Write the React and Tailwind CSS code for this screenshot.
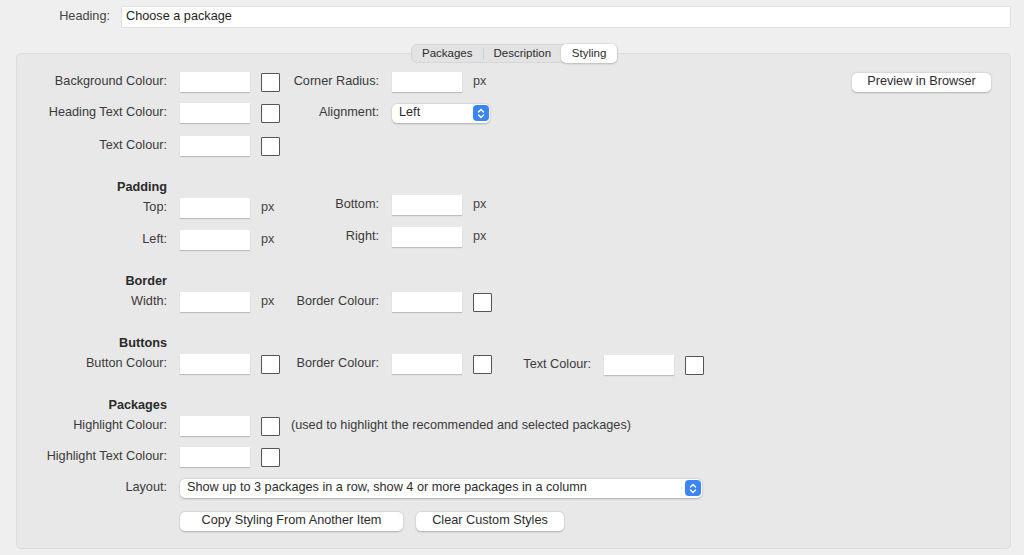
import React from "react";

const FONT = { fontFamily: '"Liberation Sans", Arial, sans-serif' };

function Field({ w = "w-[70px]" }) {
  return (
    <div
      className={`${w} h-[20px] bg-white shadow-[0_1px_1px_rgba(0,0,0,0.18)]`}
    />
  );
}

function Swatch() {
  return (
    <div className="w-[19px] h-[19px] bg-white border-[1.5px] border-[#555] rounded-[1px]" />
  );
}

function Chevrons() {
  return (
    <div className="w-[16px] h-[16px] rounded-[4px] bg-[#3c84f7] flex items-center justify-center">
      <svg width="8" height="11" viewBox="0 0 8 11" fill="none">
        <path
          d="M1.5 4 L4 1.5 L6.5 4 M1.5 7 L4 9.5 L6.5 7"
          stroke="white"
          strokeWidth="1.4"
          strokeLinecap="round"
          strokeLinejoin="round"
        />
      </svg>
    </div>
  );
}

function Select({ w, children }) {
  return (
    <div
      className={`${w} h-[19px] bg-white rounded-[5px] shadow-[0_0.5px_2px_rgba(0,0,0,0.25)] flex items-center justify-between pl-[7px] pr-[1px]`}
    >
      <span className="text-[#2c2c2c]">{children}</span>
      <Chevrons />
    </div>
  );
}

function Button({ w, children }) {
  return (
    <div
      className={`${w} h-[19px] bg-white rounded-[5px] shadow-[0_0.5px_2px_rgba(0,0,0,0.25)] flex items-center justify-center text-[#2c2c2c]`}
    >
      {children}
    </div>
  );
}

// label column ends at x=167, field starts at x=180 (panel content starts at x=17)
function Label({ w = "w-[163px]", children }) {
  return <div className={`${w} shrink-0 text-right pr-[13px] text-[#3a3a3a]`}>{children}</div>;
}

function Px() {
  return <div className="w-[30px] shrink-0 pl-[11px] text-[#444]">px</div>;
}

function SwatchCell() {
  return (
    <div className="w-[30px] shrink-0 pl-[11px] flex items-center">
      <Swatch />
    </div>
  );
}

function Row({ className = "", children }) {
  return <div className={`flex items-center h-[20px] ${className}`}>{children}</div>;
}

function Section({ className = "", children }) {
  return (
    <div className={`w-[163px] pr-[13px] text-right font-bold text-[#2a2a2a] h-[16px] leading-[16px] ${className}`}>
      {children}
    </div>
  );
}

export default function App() {
  return (
    <div
      className="w-[1024px] h-[555px] bg-[#efefef] overflow-hidden text-[12.7px]"
      style={FONT}
    >
      {/* Heading */}
      <div className="flex items-center pt-[7px]">
        <div className="w-[110px] text-right text-[#444]">Heading:</div>
        <div className="ml-[12px] w-[888px] h-[20px] bg-white shadow-[0_0_0_0.5px_rgba(0,0,0,0.12)] flex items-center pl-[4px] text-[#1e1e1e]">
          Choose a package
        </div>
      </div>

      {/* Tabs */}
      <div className="relative z-10 flex mt-[17px] -mb-[10px] pl-[411px]">
        <div className="flex items-center h-[19px] bg-[#e3e3e3] border border-[#d6d6d6] rounded-[6px] text-[11.5px] text-[#2c2c2c]">
          <div className="px-[10px]">Packages</div>
          <div className="w-px h-[11px] bg-[#cfcfcf]" />
          <div className="pl-[10px] pr-[10px]">Description</div>
          <div className="h-[19px] w-[56px] -my-px bg-white rounded-[5px] shadow-[0_0.5px_2px_rgba(0,0,0,0.2)] flex items-center justify-center">
            Styling
          </div>
        </div>
      </div>

      {/* Panel */}
      <div className="ml-[16px] w-[995px] h-[496px] bg-[#e8e8e8] border border-[#dcdcdc] rounded-[5px] pt-[18px] pr-[19px]">
        <Row>
          <Label>Background Colour:</Label>
          <Field />
          <SwatchCell />
          <Label w="w-[112px]">Corner Radius:</Label>
          <Field />
          <Px />
          <div className="ml-auto">
            <Button w="w-[139px]">Preview in Browser</Button>
          </div>
        </Row>
        <Row className="mt-[11px]">
          <Label>Heading Text Colour:</Label>
          <Field />
          <SwatchCell />
          <Label w="w-[112px]">Alignment:</Label>
          <Select w="w-[98px]">Left</Select>
        </Row>
        <Row className="mt-[13px]">
          <Label>Text Colour:</Label>
          <Field />
          <SwatchCell />
        </Row>

        <Section className="mt-[23px]">Padding</Section>
        <Row className="mt-[3px]">
          <Label>Top:</Label>
          <Field />
          <Px />
          <div className="flex items-center -translate-y-[3px]">
            <Label w="w-[112px]">Bottom:</Label>
            <Field />
            <Px />
          </div>
        </Row>
        <Row className="mt-[12px]">
          <Label>Left:</Label>
          <Field />
          <Px />
          <div className="flex items-center -translate-y-[3px]">
            <Label w="w-[112px]">Right:</Label>
            <Field />
            <Px />
          </div>
        </Row>

        <Section className="mt-[23px]">Border</Section>
        <Row className="mt-[3px]">
          <Label>Width:</Label>
          <Field />
          <Px />
          <Label w="w-[112px]">Border Colour:</Label>
          <Field />
          <SwatchCell />
        </Row>

        <Section className="mt-[23px]">Buttons</Section>
        <Row className="mt-[3px]">
          <Label>Button Colour:</Label>
          <Field />
          <SwatchCell />
          <Label w="w-[112px]">Border Colour:</Label>
          <Field />
          <SwatchCell />
          <div className="flex items-center translate-y-[1px]">
            <Label w="w-[112px]">Text Colour:</Label>
            <Field />
            <SwatchCell />
          </div>
        </Row>

        <Section className="mt-[23px]">Packages</Section>
        <Row className="mt-[3px]">
          <Label>Highlight Colour:</Label>
          <Field />
          <SwatchCell />
          <div className="pl-[11px] text-[#3a3a3a]">
            (used to highlight the recommended and selected packages)
          </div>
        </Row>
        <Row className="mt-[11px]">
          <Label>Highlight Text Colour:</Label>
          <Field />
          <SwatchCell />
        </Row>
        <Row className="mt-[11px]">
          <Label>Layout:</Label>
          <Select w="w-[522px]">
            Show up to 3 packages in a row, show 4 or more packages in a column
          </Select>
        </Row>
        <Row className="mt-[13px]">
          <Label />
          <Button w="w-[223px]">Copy Styling From Another Item</Button>
          <div className="ml-[13px]">
            <Button w="w-[148px]">Clear Custom Styles</Button>
          </div>
        </Row>
      </div>
    </div>
  );
}
